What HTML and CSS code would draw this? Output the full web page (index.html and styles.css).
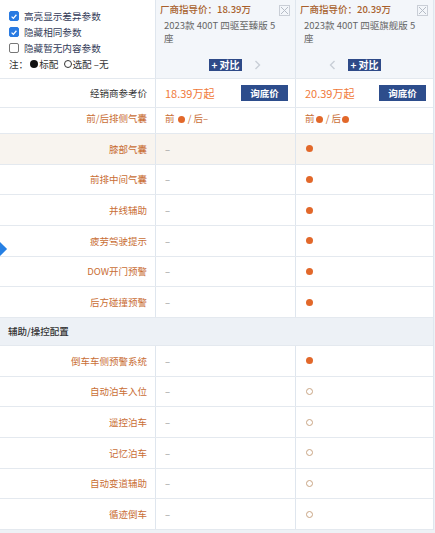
FILE: index.html
```html
<!DOCTYPE html>
<html lang="zh-CN">
<head>
<meta charset="utf-8">
<link rel="stylesheet" href="styles.css">
</head>
<body>
<div class="page">
  <div class="row head">
    <div class="opts">
      <div class="opt"><span class="cb on"><svg viewBox="0 0 10 10" width="9" height="9"><path d="M2 5.2 L4.2 7.3 L8 2.8" fill="none" stroke="#fff" stroke-width="1.6"/></svg></span>高亮显示差异参数</div>
      <div class="opt"><span class="cb on"><svg viewBox="0 0 10 10" width="9" height="9"><path d="M2 5.2 L4.2 7.3 L8 2.8" fill="none" stroke="#fff" stroke-width="1.6"/></svg></span>隐藏相同参数</div>
      <div class="opt"><span class="cb"></span>隐藏暂无内容参数</div>
      <div class="note">注：<i class="ndot"></i>标配 <i class="nring"></i>选配 –无</div>
    </div>
    <div class="car">
      <div class="guide">厂商指导价：18.39万</div>
      <span class="close"><svg viewBox="0 0 11 11" width="11" height="11"><rect x="0.5" y="0.5" width="10" height="10" fill="none" stroke="#c9ced6"/><path d="M2 2 L9 9 M9 2 L2 9" stroke="#b5bcc6" stroke-width="1"/></svg></span>
      <div class="name">2023款 400T 四驱至臻版 5 座</div>
      <div class="cmp">
        <span></span>
        <span class="add">+ 对比</span>
        <span class="chev next"><svg viewBox="0 0 7 10" width="7" height="10"><path d="M1.5 1 L5.5 5 L1.5 9" fill="none" stroke="#c8ced6" stroke-width="1.4"/></svg></span>
      </div>
    </div>
    <div class="car">
      <div class="guide">厂商指导价：20.39万</div>
      <span class="close"><svg viewBox="0 0 11 11" width="11" height="11"><rect x="0.5" y="0.5" width="10" height="10" fill="none" stroke="#c9ced6"/><path d="M2 2 L9 9 M9 2 L2 9" stroke="#b5bcc6" stroke-width="1"/></svg></span>
      <div class="name">2023款 400T 四驱旗舰版 5 座</div>
      <div class="cmp">
        <span class="chev prev"><svg viewBox="0 0 7 10" width="7" height="10"><path d="M5.5 1 L1.5 5 L5.5 9" fill="none" stroke="#c8ced6" stroke-width="1.4"/></svg></span>
        <span class="add">+ 对比</span>
        <span></span>
      </div>
    </div>
  </div>

  <div class="row price">
    <div class="lab dark">经销商参考价</div>
    <div class="val pv"><span class="pr">18.39万起</span><span class="btn">询底价</span></div>
    <div class="val pv"><span class="pr">20.39万起</span><span class="btn">询底价</span></div>
  </div>

  <div class="row r first">
    <div class="lab">前/后排侧气囊</div>
    <div class="val o"><span class="mix">前 <i class="dot"></i> / 后–</span></div>
    <div class="val o"><span class="mix">前<i class="dot"></i> / 后<i class="dot"></i></span></div>
  </div>
  <div class="row r beige">
    <div class="lab">膝部气囊</div>
    <div class="val"><span class="dash">–</span></div>
    <div class="val"><i class="dot"></i></div>
  </div>
  <div class="row r">
    <div class="lab">前排中间气囊</div>
    <div class="val"><span class="dash">–</span></div>
    <div class="val"><i class="dot"></i></div>
  </div>
  <div class="row r">
    <div class="lab">并线辅助</div>
    <div class="val"><span class="dash">–</span></div>
    <div class="val"><i class="dot"></i></div>
  </div>
  <div class="row r">
    <div class="lab">疲劳驾驶提示</div>
    <div class="val"><span class="dash">–</span></div>
    <div class="val"><i class="dot"></i></div>
  </div>
  <div class="row r">
    <div class="lab">DOW开门预警</div>
    <div class="val"><span class="dash">–</span></div>
    <div class="val"><i class="dot"></i></div>
  </div>
  <div class="row r">
    <div class="lab">后方碰撞预警</div>
    <div class="val"><span class="dash">–</span></div>
    <div class="val"><i class="dot"></i></div>
  </div>

  <div class="section">辅助/操控配置</div>

  <div class="row r">
    <div class="lab">倒车车侧预警系统</div>
    <div class="val"><span class="dash">–</span></div>
    <div class="val"><i class="dot"></i></div>
  </div>
  <div class="row r">
    <div class="lab">自动泊车入位</div>
    <div class="val"><span class="dash">–</span></div>
    <div class="val"><i class="ring"></i></div>
  </div>
  <div class="row r">
    <div class="lab">遥控泊车</div>
    <div class="val"><span class="dash">–</span></div>
    <div class="val"><i class="ring"></i></div>
  </div>
  <div class="row r">
    <div class="lab">记忆泊车</div>
    <div class="val"><span class="dash">–</span></div>
    <div class="val"><i class="ring"></i></div>
  </div>
  <div class="row r">
    <div class="lab">自动变道辅助</div>
    <div class="val"><span class="dash">–</span></div>
    <div class="val"><i class="ring"></i></div>
  </div>
  <div class="row r">
    <div class="lab">循迹倒车</div>
    <div class="val"><span class="dash">–</span></div>
    <div class="val"><i class="ring"></i></div>
  </div>

  <div class="pin"></div>
</div>
</body>
</html>
```

FILE: styles.css
```css
* { box-sizing: border-box; }
html, body { margin: 0; padding: 0; }
body {
  background: #eef2f6;
  font-family: "Noto Sans CJK SC", "Noto Sans", sans-serif;
  font-size: 9.5px;
  color: #333;
  width: 435px;
  height: 533px;
  overflow: hidden;
}
.page {
  position: relative;
  width: 434px;
  background: #fff;
  border-right: 1px solid #dfe6ee;
}
.row {
  display: grid;
  grid-template-columns: 155px 140px 138px;
  border-bottom: 1px solid #e4e9ef;
}
.row > div + div { border-left: 1px solid #dfe6ee; }

/* header */
.head { height: 79px; }
.opts { padding: 8px 0 0 9px; background: #fff; }
.opt { display: flex; align-items: center; height: 16px; color: #333b58; font-size: 9.6px; }
.cb {
  width: 10px; height: 10px; margin-right: 5px; border-radius: 2px;
  border: 1px solid #777; background: #fff; display: inline-flex;
  align-items: center; justify-content: center;
}
.cb.on { background: #2a7be2; border-color: #2a7be2; }
.cb svg { display: block; }
.note { height: 16px; display: flex; align-items: center; color: #333; font-size: 9.6px; white-space: pre; }
.ndot { display: inline-block; width: 8px; height: 8px; border-radius: 50%; background: #111; margin: 0 1px 0 2px; }
.nring { display: inline-block; width: 8px; height: 8px; border-radius: 50%; border: 1px solid #333; margin: 0 1px 0 3px; }
.car {
  position: relative;
  background: #f3f6fa;
  display: flex;
  flex-direction: column;
  padding: 3px 4px 7px 4px;
}
.guide { line-height: 12px; color: #a85f2c; font-weight: 500; }
.close { position: absolute; top: 5px; right: 5px; line-height: 0; }
.name { margin-top: 4px; padding: 0 12px 0 4px; line-height: 12.5px; color: #666; }
.cmp {
  margin-top: auto;
  display: grid;
  grid-template-columns: 1fr auto 1fr;
  column-gap: 12px;
  align-items: center;
}
.add {
  background: #2e4a88; color: #fff; font-weight: 700; font-size: 10px;
  line-height: 12px; padding: 0 2px;
}
.chev { line-height: 0; }
.chev.next { justify-self: start; }
.chev.prev { justify-self: end; }

/* price */
.price { height: 29px; }
.lab {
  display: flex; align-items: center; justify-content: flex-end;
  padding-right: 8px; color: #c96e35;
}
.lab.dark { color: #333; }
.val { display: flex; align-items: center; padding-left: 9px; color: #c96e35; }
.pv { justify-content: space-between; padding-right: 7px; }
.pr { color: #f07a3a; font-size: 11px; }
.btn {
  background: #2d4d8c; color: #fff; font-weight: 700; width: 47px; height: 16px;
  display: flex; align-items: center; justify-content: center; font-size: 9.5px;
}

/* body rows */
.r { height: 30.67px; }
.r.first { height: 26px; }
.r.first > div { align-items: flex-start; padding-top: 3px; }
.mix { white-space: pre; }
.mix .dot { vertical-align: -0.5px; margin: 0 1px; }
.beige { background: #f8f4ef; }
.dash { color: #9a9a9a; }
.dot {
  display: inline-block; width: 7px; height: 7px; border-radius: 50%;
  background: #e2682a; margin-left: 1px;
}
.ring {
  display: inline-block; width: 7px; height: 7px; border-radius: 50%;
  border: 1px solid #c9a584; margin-left: 1px;
}
.o { color: #c96e35; }

.section {
  height: 28px; background: #edf1f6; padding-left: 8px;
  display: flex; align-items: center; color: #333; font-weight: 500;
  border-bottom: 1px solid #e4e9ef;
}

.pin {
  position: absolute; left: -5px; top: 243.5px; width: 10px; height: 10px;
  background: #2680e4; transform: rotate(45deg);
}
```
